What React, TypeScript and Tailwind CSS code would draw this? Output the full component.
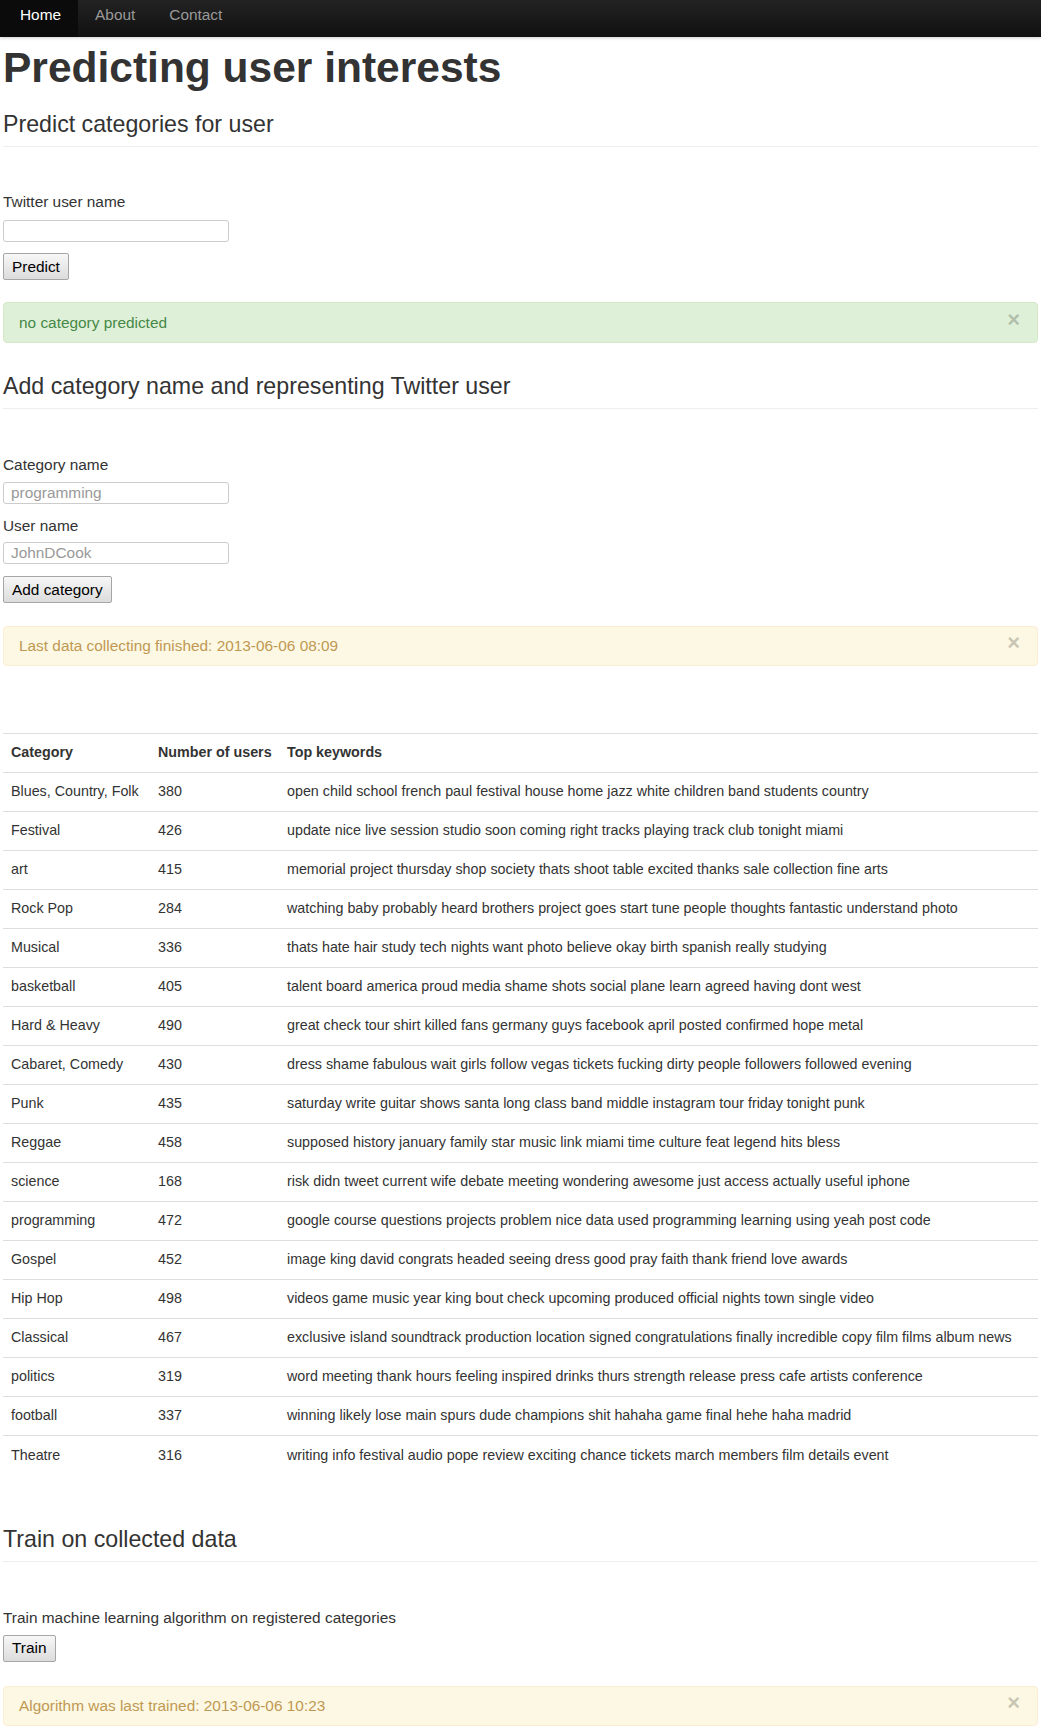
import React from "react";

const rows = [
  ["Blues, Country, Folk", "380", "open child school french paul festival house home jazz white children band students country"],
  ["Festival", "426", "update nice live session studio soon coming right tracks playing track club tonight miami"],
  ["art", "415", "memorial project thursday shop society thats shoot table excited thanks sale collection fine arts"],
  ["Rock Pop", "284", "watching baby probably heard brothers project goes start tune people thoughts fantastic understand photo"],
  ["Musical", "336", "thats hate hair study tech nights want photo believe okay birth spanish really studying"],
  ["basketball", "405", "talent board america proud media shame shots social plane learn agreed having dont west"],
  ["Hard & Heavy", "490", "great check tour shirt killed fans germany guys facebook april posted confirmed hope metal"],
  ["Cabaret, Comedy", "430", "dress shame fabulous wait girls follow vegas tickets fucking dirty people followers followed evening"],
  ["Punk", "435", "saturday write guitar shows santa long class band middle instagram tour friday tonight punk"],
  ["Reggae", "458", "supposed history january family star music link miami time culture feat legend hits bless"],
  ["science", "168", "risk didn tweet current wife debate meeting wondering awesome just access actually useful iphone"],
  ["programming", "472", "google course questions projects problem nice data used programming learning using yeah post code"],
  ["Gospel", "452", "image king david congrats headed seeing dress good pray faith thank friend love awards"],
  ["Hip Hop", "498", "videos game music year king bout check upcoming produced official nights town single video"],
  ["Classical", "467", "exclusive island soundtrack production location signed congratulations finally incredible copy film films album news"],
  ["politics", "319", "word meeting thank hours feeling inspired drinks thurs strength release press cafe artists conference"],
  ["football", "337", "winning likely lose main spurs dude champions shit hahaha game final hehe haha madrid"],
  ["Theatre", "316", "writing info festival audio pope review exciting chance tickets march members film details event"],
];

const Alert = ({ kind, text, className }: { kind: "success" | "warning"; text: string; className: string }) => (
  <div
    className={`${className} flex h-[40px] items-center justify-between rounded-[4px] border pl-[15px] pr-[17px] text-[15.4px] ${
      kind === "success"
        ? "border-[#d6e9c6] bg-[#dff0d8] text-[#468847]"
        : "border-[#fbeed5] bg-[#fcf8e3] text-[#c09853]"
    }`}
  >
    <span>{text}</span>
    <span className="-mt-[6px] text-[22px] font-bold leading-[20px] text-black opacity-20">×</span>
  </div>
);

const Button = ({ label, className }: { label: string; className: string }) => (
  <button
    className={`${className} block h-[27px] rounded-[2px] border border-[#a6a6a6] bg-gradient-to-b from-[#f7f7f7] to-[#dcdcdc] px-[8px] text-[15.4px] leading-none text-black`}
  >
    {label}
  </button>
);

const Input = ({ placeholder, className }: { placeholder?: string; className: string }) => (
  <input
    placeholder={placeholder}
    className={`${className} block h-[22px] w-[226px] rounded-[3px] border border-[#ccc] px-[7px] text-[15.4px] text-[#555] placeholder:text-[#999]`}
  />
);

const SectionTitle = ({ text, className }: { text: string; className: string }) => (
  <h3 className={`${className} border-b border-[#eee] pb-[7px] text-[23.2px] font-normal leading-[30px]`}>{text}</h3>
);

export default function App() {
  return (
    <div className="min-h-[1733px] bg-white text-[#333]" style={{ fontFamily: '"Liberation Sans", Arial, sans-serif' }}>
      <nav className="flex h-[37px] bg-gradient-to-b from-[#232323] to-[#101010] shadow-[0_1px_3px_rgba(0,0,0,0.2)]">
        <a className="h-full bg-[#0b0b0b] pl-[20px] pr-[17px] pt-[4px] text-[15.4px] leading-[22px] text-white">Home</a>
        <a className="h-full px-[17px] pt-[4px] text-[15.4px] leading-[22px] text-[#999]">About</a>
        <a className="h-full px-[17px] pt-[4px] text-[15.4px] leading-[22px] text-[#999]">Contact</a>
      </nav>

      <main className="px-[3px] pb-[7px]">
        <h1 className="mt-[9px] text-[42.5px] font-bold leading-[44px]">Predicting user interests</h1>

        <SectionTitle className="mt-[19px]" text="Predict categories for user" />
        <label className="mt-[44px] block text-[15.4px] leading-[22px]">Twitter user name</label>
        <Input className="mt-[7px]" />
        <Button className="mt-[11px]" label="Predict" />
        <Alert className="mt-[22px] h-[41px]" kind="success" text="no category predicted" />

        <SectionTitle className="mt-[28px]" text="Add category name and representing Twitter user" />
        <label className="mt-[45px] block text-[15.4px] leading-[22px]">Category name</label>
        <Input className="mt-[6px]" placeholder="programming" />
        <label className="mt-[11px] block text-[15.4px] leading-[22px]">User name</label>
        <Input className="mt-[5px]" placeholder="JohnDCook" />
        <Button className="mt-[12px]" label="Add category" />
        <Alert className="mt-[23px]" kind="warning" text="Last data collecting finished: 2013-06-06 08:09" />

        <table className="mt-[67px] w-full table-fixed border-collapse text-left text-[14.3px]">
          <thead>
            <tr className="border-t border-[#ddd]">
              <th className="h-[39px] w-[147px] whitespace-nowrap px-[8px] font-bold">Category</th>
              <th className="h-[39px] w-[129px] whitespace-nowrap px-[8px] font-bold">Number of users</th>
              <th className="h-[39px] whitespace-nowrap px-[8px] font-bold">Top keywords</th>
            </tr>
          </thead>
          <tbody>
            {rows.map((r) => (
              <tr key={r[0]} className="border-t border-[#ddd]">
                <td className="h-[39px] whitespace-nowrap px-[8px]">{r[0]}</td>
                <td className="h-[39px] px-[8px]">{r[1]}</td>
                <td className="h-[39px] px-[8px]">{r[2]}</td>
              </tr>
            ))}
          </tbody>
        </table>

        <SectionTitle className="mt-[49px]" text="Train on collected data" />
        <label className="mt-[45px] block text-[15.4px] leading-[22px]">Train machine learning algorithm on registered categories</label>
        <Button className="mt-[6px]" label="Train" />
        <Alert className="mt-[24px]" kind="warning" text="Algorithm was last trained: 2013-06-06 10:23" />
      </main>
    </div>
  );
}
